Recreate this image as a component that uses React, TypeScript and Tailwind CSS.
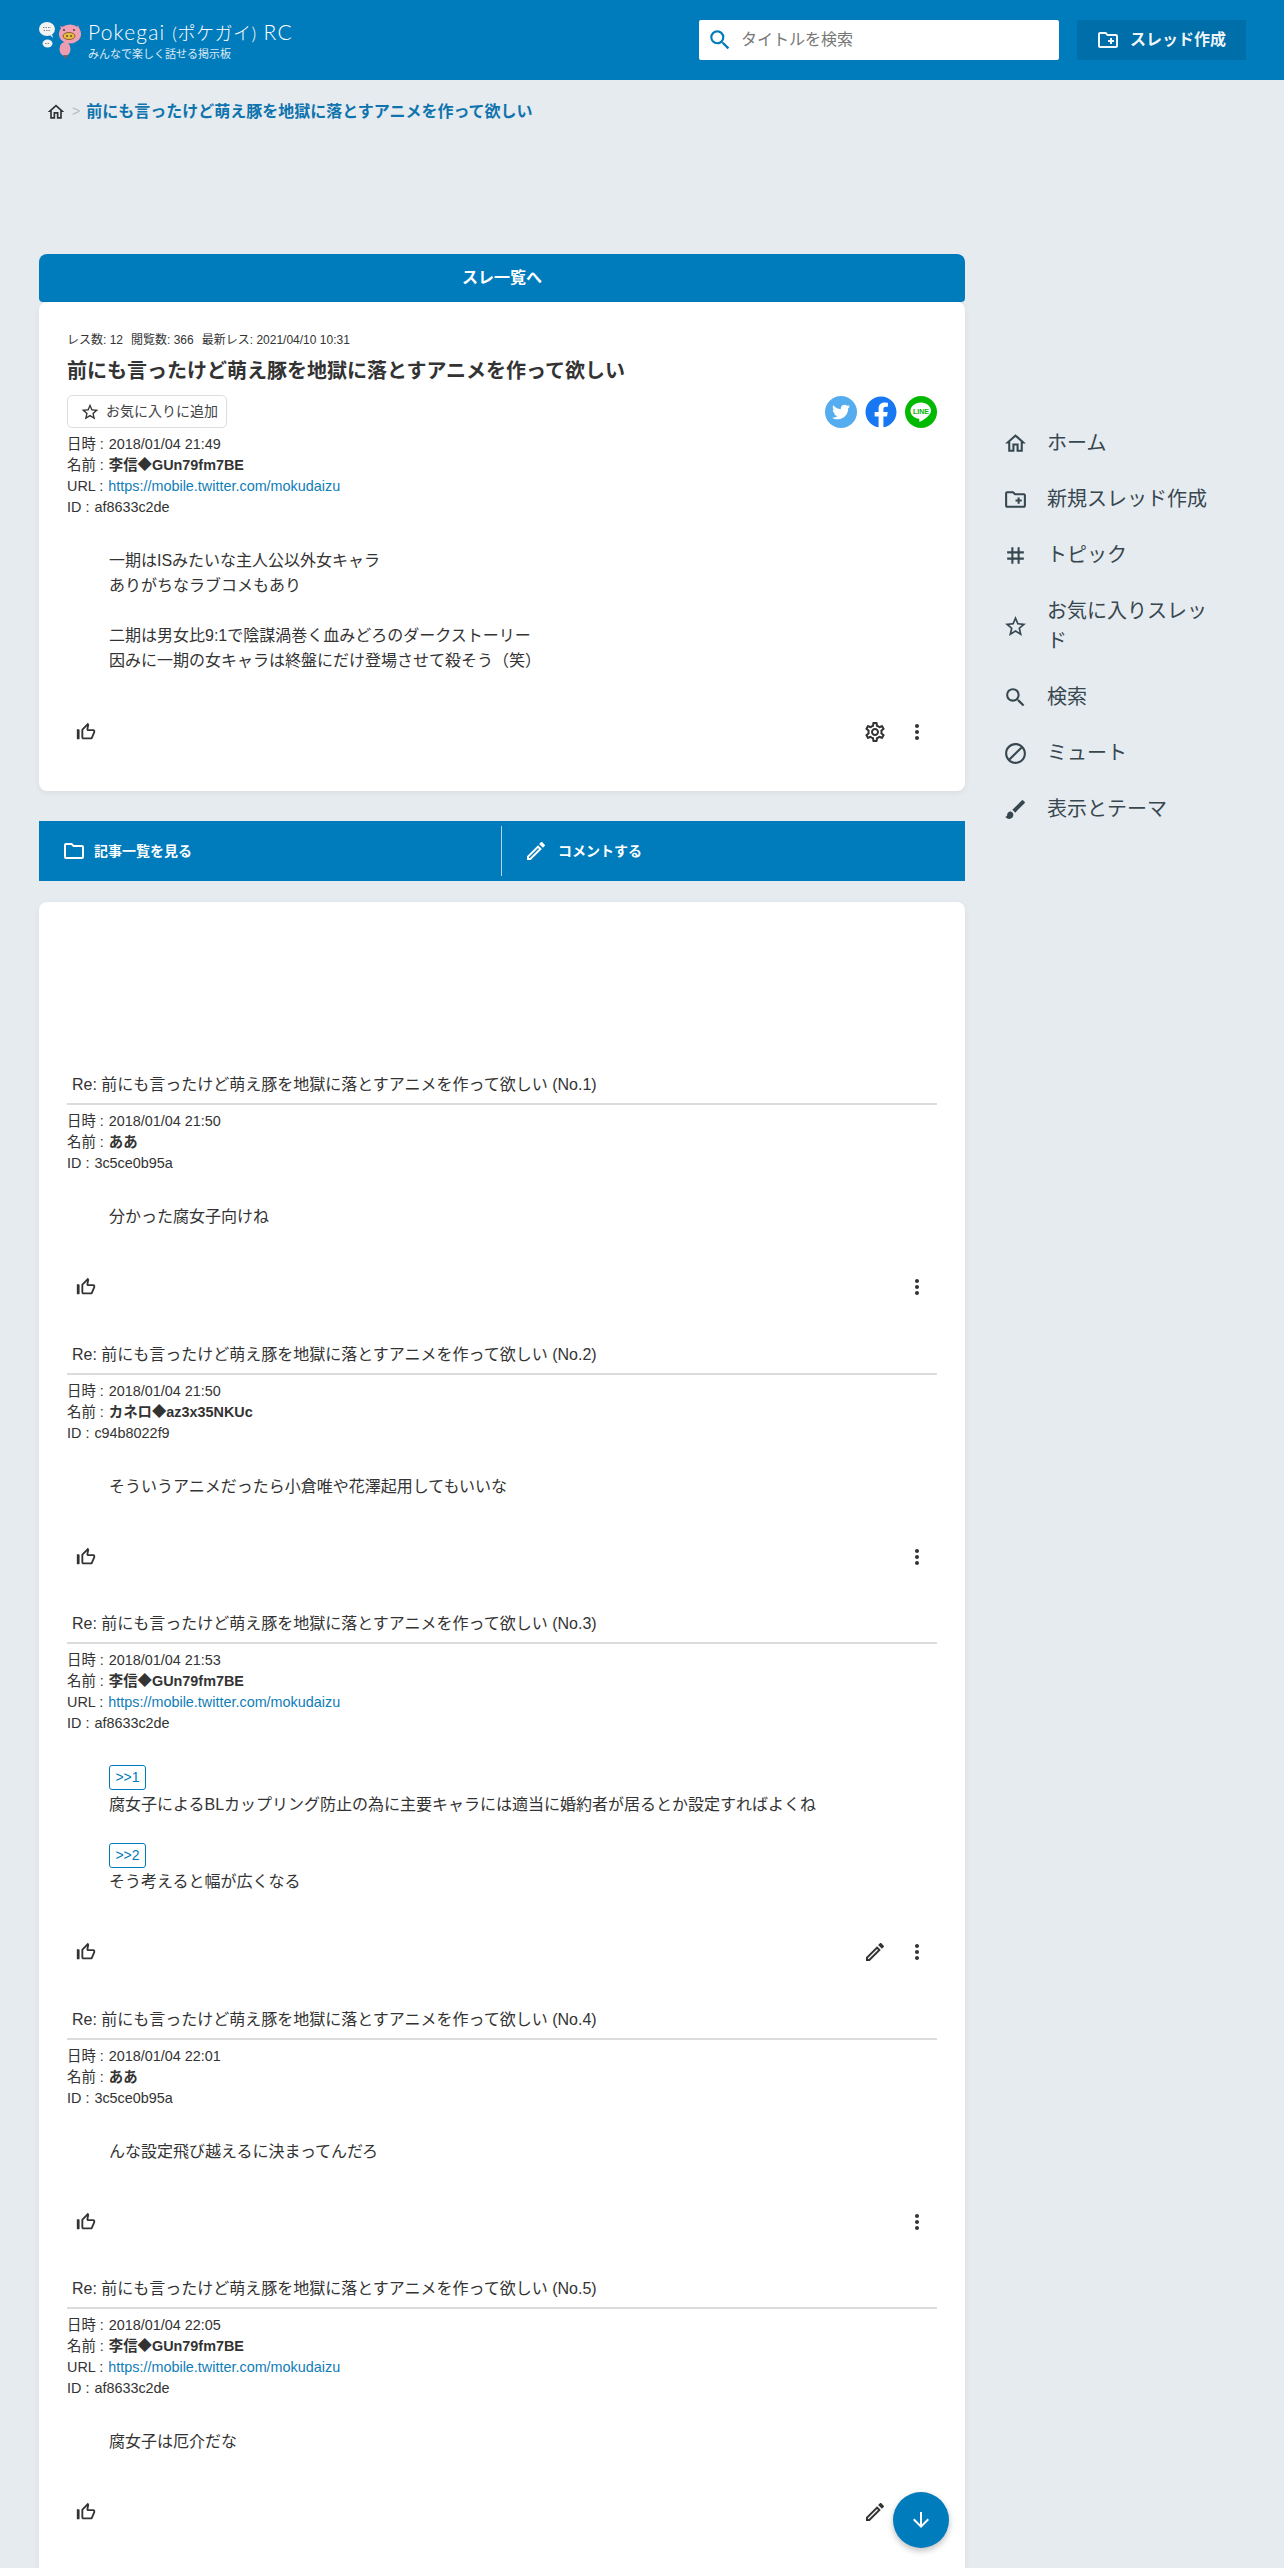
import {
  MdArrowDownward,
  MdBlock,
  MdBrush,
  MdMoreVert,
  MdOutlineCreateNewFolder,
  MdOutlineEdit,
  MdOutlineFolder,
  MdOutlineHome,
  MdOutlineSettings,
  MdSearch,
  MdStarBorder,
  MdTag,
  MdThumbUpOffAlt,
} from "react-icons/md";
import { FaFacebook, FaTwitter } from "react-icons/fa";

const threadTitle = "前にも言ったけど萌え豚を地獄に落とすアニメを作って欲しい";
const twitterUrl = "https://mobile.twitter.com/mokudaizu";

const sideItems = [
  { icon: MdOutlineHome, label: "ホーム" },
  { icon: MdOutlineCreateNewFolder, label: "新規スレッド作成" },
  { icon: MdTag, label: "トピック" },
  { icon: MdStarBorder, label: "お気に入りスレッド" },
  { icon: MdSearch, label: "検索" },
  { icon: MdBlock, label: "ミュート" },
  { icon: MdBrush, label: "表示とテーマ" },
];

type Block = { ref?: string; text: string };

type Post = {
  no: number;
  date: string;
  name: string;
  url?: string;
  id: string;
  blocks: Block[];
  canEdit?: boolean;
};

const posts: Post[] = [
  { no: 1, date: "2018/01/04 21:50", name: "ああ", id: "3c5ce0b95a", blocks: [{ text: "分かった腐女子向けね" }] },
  {
    no: 2,
    date: "2018/01/04 21:50",
    name: "カネロ◆az3x35NKUc",
    id: "c94b8022f9",
    blocks: [{ text: "そういうアニメだったら小倉唯や花澤起用してもいいな" }],
  },
  {
    no: 3,
    date: "2018/01/04 21:53",
    name: "李信◆GUn79fm7BE",
    url: twitterUrl,
    id: "af8633c2de",
    canEdit: true,
    blocks: [
      { ref: ">>1", text: "腐女子によるBLカップリング防止の為に主要キャラには適当に婚約者が居るとか設定すればよくね" },
      { ref: ">>2", text: "そう考えると幅が広くなる" },
    ],
  },
  {
    no: 4,
    date: "2018/01/04 22:01",
    name: "ああ",
    id: "3c5ce0b95a",
    blocks: [{ text: "んな設定飛び越えるに決まってんだろ" }],
  },
  {
    no: 5,
    date: "2018/01/04 22:05",
    name: "李信◆GUn79fm7BE",
    url: twitterUrl,
    id: "af8633c2de",
    canEdit: true,
    blocks: [{ text: "腐女子は厄介だな" }],
  },
];

// ロゴは画像の代わりに簡単なSVGで描く
const Logo = () => (
  <svg width="44" height="44" viewBox="0 0 44 44" className="shrink-0">
    <ellipse cx="9" cy="11" rx="8" ry="7" fill="#f2f2f2" />
    <path d="M12 17l3 3-1-4z" fill="#f2f2f2" />
    <ellipse cx="9.500" cy="25.500" rx="5" ry="4" fill="#f2f2f2" />
    <path d="M5 9.500h8M5.500 12.500h7M7 25.500h5" stroke="#888" strokeWidth="1" strokeDasharray="1.500 1" />
    <ellipse cx="27" cy="31" rx="5.500" ry="7" fill="#ee9db0" />
    <path d="M25 37l2.500 4 2-4z" fill="#8a5a5a" />
    <path d="M22 8l5 1-3 5zM40 7l2 5-5 0z" fill="#e5869c" />
    <ellipse cx="32" cy="16" rx="11" ry="9.500" fill="#f0a0b2" />
    <ellipse cx="31" cy="18" rx="6" ry="3.500" fill="#e8bd45" stroke="#6b4a20" strokeWidth="0.800" />
    <circle cx="29" cy="18" r="1" fill="#6b4a20" />
    <circle cx="33" cy="18" r="1" fill="#6b4a20" />
    <circle cx="26" cy="12" r="0.900" fill="#333" />
    <circle cx="36" cy="12" r="0.900" fill="#333" />
  </svg>
);

const LineIcon = () => (
  <svg width="32" height="32" viewBox="0 0 32 32">
    <circle cx="16" cy="16" r="16" fill="#00b900" />
    <path d="M16 6.500c-6 0-10.500 3.700-10.500 8.300 0 4 3.500 7.400 8.300 8 .8.200.6 1.600.4 2.500 0 .5.500.6 1 .3 1.800-1 6-3.500 8-5.700 1.700-1.600 2.800-3.200 2.800-5.100 0-4.600-4.300-8.300-10-8.300z" fill="#fff" />
    <text x="16" y="17.500" textAnchor="middle" fontSize="7" fontWeight="700" fill="#00b900" fontFamily="Liberation Sans, sans-serif">LINE</text>
  </svg>
);

const MetaLine = ({ label, children }: { label: string; children: React.ReactNode }) => (
  <div className="h-[21px] text-[14.4px] leading-[21px] text-[#333]">
    {label} :<span className="ml-[5px]">{children}</span>
  </div>
);

const PostMeta = ({ date, name, url, id }: Pick<Post, "date" | "name" | "url" | "id">) => (
  <div>
    <MetaLine label="日時">{date}</MetaLine>
    <MetaLine label="名前">
      <b className="font-bold">{name}</b>
    </MetaLine>
    {url && (
      <MetaLine label="URL">
        <a className="text-[#0f7db8]">{url}</a>
      </MetaLine>
    )}
    <MetaLine label="ID">{id}</MetaLine>
  </div>
);

const ActionButton = ({ children }: { children: React.ReactNode }) => (
  <button className="flex h-10 w-10 items-center justify-center text-[24px] text-[#333]">{children}</button>
);

const PostActions = ({ edit, settings }: { edit?: boolean; settings?: boolean }) => (
  <div className="-ml-px flex h-10 items-center justify-between">
    <ActionButton>
      <MdThumbUpOffAlt className="text-[22px]" />
    </ActionButton>
    <div className="flex gap-[2px]">
      {settings && (
        <ActionButton>
          <MdOutlineSettings />
        </ActionButton>
      )}
      {edit && (
        <ActionButton>
          <MdOutlineEdit />
        </ActionButton>
      )}
      <ActionButton>
        <MdMoreVert />
      </ActionButton>
    </div>
  </div>
);

const PostItem = ({ post }: { post: Post }) => (
  <article className="mb-[35.5px]">
    <h3 className="border-b-2 border-[#dcdcdc] pb-[6px] pl-[5px] text-[16px] leading-6 font-normal text-[#333]">
      Re: {threadTitle} (No.{post.no})
    </h3>
    <div className="mt-[6px]">
      <PostMeta date={post.date} name={post.name} url={post.url} id={post.id} />
    </div>
    <div className="mt-[30px] pl-[42px] text-[16px] leading-[25px] text-[#333]">
      {post.blocks.map((block, i) => (
        <div key={i} className={i > 0 ? "mt-[25px]" : ""}>
          {block.ref && (
            <div className="h-[27.5px] pt-[1px]">
              <span className="flex h-[25px] w-[37px] items-center justify-center rounded-[3px] border border-[#007bbb] text-[14px] text-[#007bbb]">
                {block.ref}
              </span>
            </div>
          )}
          <p>{block.text}</p>
        </div>
      ))}
    </div>
    <div className="mt-[38px]">
      <PostActions edit={post.canEdit} />
    </div>
  </article>
);

export default function App() {
  return (
    <div className="relative h-[2568px] overflow-hidden bg-[#e6ebf0] font-['Liberation_Sans','Noto_Sans_CJK_JP',sans-serif] text-[#333]">
      <header className="flex h-20 items-center bg-[#007bbb] px-[38px]">
        <Logo />
        <div className="ml-[6px] text-white">
          <div className="font-['Lato','Noto_Sans_CJK_JP',sans-serif] text-[21px] leading-[26px] font-light tracking-[1.2px] whitespace-nowrap">
            Pokegai <span className="text-[18px] tracking-[0.5px]">(ポケガイ)</span> RC
          </div>
          <div className="mt-[1px] text-[11px] leading-[14px] text-white/85">みんなで楽しく話せる掲示板</div>
        </div>
        <div className="ml-auto flex h-10 w-[360px] items-center rounded-[2px] bg-white pl-[8px]">
          <MdSearch className="text-[26px] text-[#007bbb]" />
          <span className="ml-[8px] text-[16px] text-[#777]">タイトルを検索</span>
        </div>
        <button className="ml-[18px] flex h-10 w-[169px] items-center bg-[#006ea8] pl-[19px] text-[16px] font-bold text-white/95">
          <MdOutlineCreateNewFolder className="text-[24px]" />
          <span className="ml-[10px]">スレッド作成</span>
        </button>
      </header>

      <div className="flex">
        <main className="ml-[39px] w-[926px] shrink-0">
          <nav className="flex h-[63px] items-center pl-[7px] text-[16px]">
            <MdOutlineHome className="text-[20px] text-[#333]" />
            <span className="mx-[6px] text-[14px] text-[#bbb]">&gt;</span>
            <a className="font-bold text-[#0f74ad]">{threadTitle}</a>
          </nav>

          <div className="mt-[111px] flex h-12 items-center justify-center rounded-t-[8px] rounded-b-[4px] bg-[#007bbb] text-[16px] font-bold text-white">
            スレ一覧へ
          </div>

          <section className="rounded-[8px] bg-white pt-[29px] pr-[28px] pb-[39px] pl-[28px] shadow-[0_2px_6px_rgba(0,0,0,0.06)]">
            <div className="flex gap-[8px] text-[12px] leading-[18px] text-[#333]">
              <span>レス数: 12</span>
              <span>閲覧数: 366</span>
              <span>最新レス: 2021/04/10 10:31</span>
            </div>
            <h1 className="mt-[7px] text-[20px] leading-[30px] font-bold text-[#333]">{threadTitle}</h1>
            <div className="mt-[9px] flex items-start justify-between">
              <button className="flex h-[33px] w-[160px] items-center rounded-[5px] border border-[#ddd] pl-[12px] text-[14px] text-[#444]">
                <MdStarBorder className="text-[20px] text-[#333]" />
                <span className="ml-[6px]">お気に入りに追加</span>
              </button>
              <div className="flex gap-[8px] pt-[1px]">
                <span className="flex h-8 w-8 items-center justify-center rounded-full bg-[#55acee] text-[18px] text-white">
                  <FaTwitter />
                </span>
                <FaFacebook className="text-[32px] text-[#1877f2]" />
                <LineIcon />
              </div>
            </div>
            <div className="mt-[6px]">
              <PostMeta date="2018/01/04 21:49" name="李信◆GUn79fm7BE" url={twitterUrl} id="af8633c2de" />
            </div>
            <div className="mt-[30px] pl-[42px] text-[16px] leading-[25px] text-[#333]">
              <p>一期はISみたいな主人公以外女キャラ</p>
              <p>ありがちなラブコメもあり</p>
              <p className="mt-[25px]">二期は男女比9:1で陰謀渦巻く血みどろのダークストーリー</p>
              <p>因みに一期の女キャラは終盤にだけ登場させて殺そう（笑）</p>
            </div>
            <div className="mt-[39px]">
              <PostActions settings />
            </div>
          </section>

          <div className="mt-[30px] flex h-[60px] items-center bg-[#007bbb] text-[14px] font-bold text-white">
            <div className="flex h-[50px] w-[463px] items-center border-r border-white/70 pl-[23px]">
              <MdOutlineFolder className="text-[24px]" />
              <span className="ml-[8px]">記事一覧を見る</span>
            </div>
            <div className="flex items-center pl-[22px]">
              <MdOutlineEdit className="text-[24px]" />
              <span className="ml-[10px]">コメントする</span>
            </div>
          </div>

          <section className="mt-[21px] rounded-[8px] bg-white pt-[171px] pr-[28px] pb-10 pl-[28px] shadow-[0_2px_6px_rgba(0,0,0,0.06)]">
            {posts.map((post) => (
              <PostItem key={post.no} post={post} />
            ))}
          </section>
        </main>

        <aside className="ml-[38px] w-[214px] pt-[335px]">
          {sideItems.map(({ icon: Icon, label }) => (
            <div key={label} className="flex items-center gap-[19px] py-[13px] text-[20px] leading-[30px] text-[#37474f]">
              <Icon className="shrink-0 text-[25px]" />
              <span className="w-[170px]">{label}</span>
            </div>
          ))}
        </aside>
      </div>

      <button className="absolute right-[335px] bottom-[20px] flex h-14 w-14 items-center justify-center rounded-full bg-[#007bbb] text-[24px] text-white shadow-[0_3px_6px_rgba(0,0,0,0.25)]">
        <MdArrowDownward />
      </button>
    </div>
  );
}
